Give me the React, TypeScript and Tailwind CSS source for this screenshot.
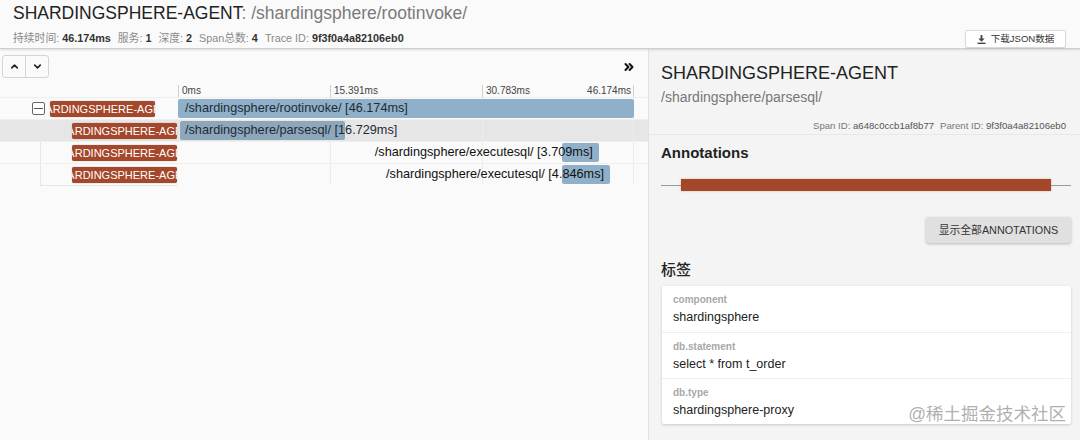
import { ChevronUp, ChevronDown, ChevronsRight } from "lucide-react";

const TOTAL = 46.174;
const TRACK = 456;

const spans = [
    { id: "s1", depth: 0, name: "/shardingsphere/rootinvoke/", start: 0, dur: 46.174, root: true },
    { id: "s2", depth: 1, name: "/shardingsphere/parsesql/", start: 0.2, dur: 16.729, selected: true },
    { id: "s3", depth: 1, name: "/shardingsphere/executesql/", start: 38.9, dur: 3.709, labelLeft: true },
    { id: "s4", depth: 1, name: "/shardingsphere/executesql/", start: 38.9, dur: 4.846, labelLeft: true },
];

const ticks = ["0ms", "15.391ms", "30.783ms", "46.174ms"];

const tags = [
    { key: "component", value: "shardingsphere" },
    { key: "db.statement", value: "select * from t_order" },
    { key: "db.type", value: "shardingsphere-proxy" },
];

function Stat({ label, value }: { label: string; value: string }) {
    return (
        <span className="mr-[7px]">
            <span className="text-[#8a8a8a]">{label}: </span>
            <span className="font-bold text-[#333]">{value}</span>
        </span>
    );
}

function DownloadIcon() {
    return (
        <svg width="9" height="9" viewBox="0 0 10 10" className="mr-[5px]">
            <path d="M4 0h2v4h2.5L5 7.5 1.5 4H4z" fill="#444" />
            <rect x="0.5" y="8.5" width="9" height="1.5" fill="#444" />
        </svg>
    );
}

export default function App() {
    return (
        <div
            className="w-[1080px] h-[440px] overflow-hidden flex flex-col bg-[#fafafa] text-[#222]"
            style={{ fontFamily: '"Liberation Sans", Arial, "Noto Sans CJK SC", sans-serif' }}
        >
            {/* Header */}
            <div className="h-[49px] shrink-0 pl-[13px] pr-[14px] pt-[2px] border-b border-[#cfcfcf] shadow-[0_1px_2px_rgba(0,0,0,0.12)] bg-[#fafafa] relative z-10">
                <div className="h-[22px] leading-[22px] text-[17.5px] whitespace-nowrap">
                    <span className="text-[#222]">SHARDINGSPHERE-AGENT</span>
                    <span className="text-[#7a7a7a]">: /shardingsphere/rootinvoke/</span>
                </div>
                <div className="mt-[4px] flex items-center justify-between">
                    <div className="text-[10.8px] leading-[14px] whitespace-nowrap">
                        <Stat label="持续时间" value="46.174ms" />
                        <Stat label="服务" value="1" />
                        <Stat label="深度" value="2" />
                        <Stat label="Span总数" value="4" />
                        <Stat label="Trace ID" value="9f3f0a4a82106eb0" />
                    </div>
                    <button className="mt-[2px] h-[18px] w-[101px] flex items-center justify-center bg-white border border-[#d9d9d9] rounded-[2px] text-[9.5px] text-[#333] shadow-[0_1px_1px_rgba(0,0,0,0.06)]">
                        <DownloadIcon />
                        下载JSON数据
                    </button>
                </div>
            </div>

            <div className="flex flex-1 min-h-0">
                {/* Left: trace timeline */}
                <div className="w-[648px] shrink-0 bg-[#fafafa] flex flex-col">
                    <div className="h-[36px] shrink-0 flex items-start justify-between pl-[2px] pr-[12px] pt-[6px]">
                        <div className="flex h-[23px] border border-[#d4d4d4] rounded-[3px] bg-[#fafafa]">
                            <div className="w-[23px] flex items-center justify-center border-r border-[#d4d4d4]">
                                <ChevronUp size={11} strokeWidth={3.5} color="#222" />
                            </div>
                            <div className="w-[22px] flex items-center justify-center">
                                <ChevronDown size={11} strokeWidth={3.5} color="#222" />
                            </div>
                        </div>
                        <div className="pt-[5px]">
                            <ChevronsRight size={14} strokeWidth={3.5} color="#111" />
                        </div>
                    </div>

                    {/* tick header */}
                    <div className="h-[12px] flex">
                        <div className="w-[178px] shrink-0" />
                        <div className="w-[456px] grid grid-cols-3 text-[10px] leading-[12px] text-[#444]">
                            <div className="border-l border-[#cfcfcf] pl-[3px]">{ticks[0]}</div>
                            <div className="border-l border-[#cfcfcf] pl-[3px]">{ticks[1]}</div>
                            <div className="border-l border-r border-[#cfcfcf] pl-[3px] flex justify-between pr-[2px]">
                                <span>{ticks[2]}</span>
                                <span>{ticks[3]}</span>
                            </div>
                        </div>
                    </div>

                    {/* rows */}
                    <div className="flex flex-col">
                        {spans.map((s) => {
                            const left = (s.start / TOTAL) * TRACK;
                            const width = (s.dur / TOTAL) * TRACK;
                            return (
                                <div
                                    key={s.id}
                                    className={`h-[22px] flex border-t border-[#efefef] ${s.selected ? "bg-[#e6e6e6]" : ""}`}
                                >
                                    <div className="w-[178px] shrink-0 flex items-center">
                                        {s.root ? (
                                            <div className="ml-[32px] w-[13px] h-[13px] border border-[#666] rounded-[2px] bg-white flex items-center justify-center">
                                                <div className="w-[9px] h-[1.5px] bg-[#555]" />
                                            </div>
                                        ) : (
                                            <div className="ml-[40px] w-[32px] self-stretch border-l border-[#e6e6e6]" />
                                        )}
                                        <div
                                            className={`${s.root ? "ml-[5px]" : ""} w-[105px] h-[16px] bg-[#a5472b] rounded-[2px] overflow-hidden flex justify-center items-center text-white text-[11px] leading-[16px] whitespace-nowrap shadow-[0_0_1px_rgba(0,0,0,0.5)]`}
                                        >
                                            SHARDINGSPHERE-AGENT
                                        </div>
                                    </div>
                                    <div className="w-[456px] relative grid grid-cols-3">
                                        <div />
                                        <div className="border-l border-[#ececec]" />
                                        <div className="border-l border-r border-[#ececec]" />
                                        <div
                                            className={`absolute top-[1px] h-[19px] rounded-[2px] ${s.selected ? "bg-[#8ea8bb]" : "bg-[#8fb0c8]"}`}
                                            style={{ left, width }}
                                        />
                                        {s.labelLeft ? (
                                            <div
                                                className="absolute top-0 h-[21px] leading-[21px] text-[12.7px] text-[#111] whitespace-nowrap"
                                                style={{ right: TRACK - (left + width) + 6 }}
                                            >
                                                {s.name} [{s.dur.toFixed(3)}ms]
                                            </div>
                                        ) : (
                                            <div
                                                className="absolute top-0 h-[21px] leading-[21px] text-[12.7px] text-[#1d2b38] whitespace-nowrap"
                                                style={{ left: left + 7 - (s.selected ? 2 : 0) }}
                                            >
                                                {s.name} [{s.dur.toFixed(3)}ms]
                                            </div>
                                        )}
                                    </div>
                                </div>
                            );
                        })}
                        <div className="h-[3px] ml-[40px] w-[138px] border-t border-[#e6e6e6]" />
                    </div>
                </div>

                {/* Right: span detail */}
                <div className="flex-1 bg-[#f4f4f4] border-l border-[#e2e2e2] pl-[12px] pr-[9px] pt-[13px] relative">
                    <div className="text-[18px] leading-[22px] text-[#222]">SHARDINGSPHERE-AGENT</div>
                    <div className="mt-[4px] text-[14px] leading-[18px] text-[#777]">/shardingsphere/parsesql/</div>
                    <div className="mt-[14px] pr-[5px] text-right text-[9.6px] leading-[12px] text-[#777] whitespace-nowrap">
                        Span ID: <span className="text-[#555]">a648c0ccb1af8b77</span>
                        <span className="ml-[6px]">Parent ID: </span>
                        <span className="text-[#555]">9f3f0a4a82106eb0</span>
                    </div>
                    <div className="mt-[2px] -ml-[12px] -mr-[9px] border-t border-[#e8e8e8]" />
                    <div className="mt-[9px] text-[15px] leading-[18px] font-bold text-[#222]">Annotations</div>
                    <div className="mt-[17px] h-[12px] flex items-center">
                        <div className="w-[20px] h-px bg-[#999]" />
                        <div className="flex-1 h-[12px] bg-[#a3472b] shadow-[0_0_2px_rgba(200,80,40,0.4)]" />
                        <div className="w-[20px] h-px bg-[#999]" />
                    </div>
                    <div className="mt-[26px] flex justify-end">
                        <button className="w-[145px] h-[26px] bg-[#e0e0e0] rounded-[3px] text-[10.8px] text-[#333] shadow-[0_1px_3px_rgba(0,0,0,0.25)]">
                            显示全部ANNOTATIONS
                        </button>
                    </div>
                    <div className="mt-[17px] text-[15px] leading-[20px] font-medium text-[#222]">标签</div>
                    <div className="mt-[6px] ml-[1px] bg-white rounded-[2px] shadow-[0_1px_3px_rgba(0,0,0,0.18)]">
                        {tags.map((t, i) => (
                            <div
                                key={t.key}
                                className={`h-[46px] px-[11px] pt-[7px] ${i > 0 ? "border-t border-[#eeeeee]" : ""}`}
                            >
                                <div className="text-[10px] leading-[13px] font-bold text-[#a8a8a8]">{t.key}</div>
                                <div className="mt-[3px] text-[12.5px] leading-[16px] text-[#222]">{t.value}</div>
                            </div>
                        ))}
                    </div>
                    <div className="absolute right-[14px] bottom-[16px] text-[17.5px] leading-[20px] text-[#8c8c8c]/70 whitespace-nowrap">
                        @稀土掘金技术社区
                    </div>
                </div>
            </div>
        </div>
    );
}
